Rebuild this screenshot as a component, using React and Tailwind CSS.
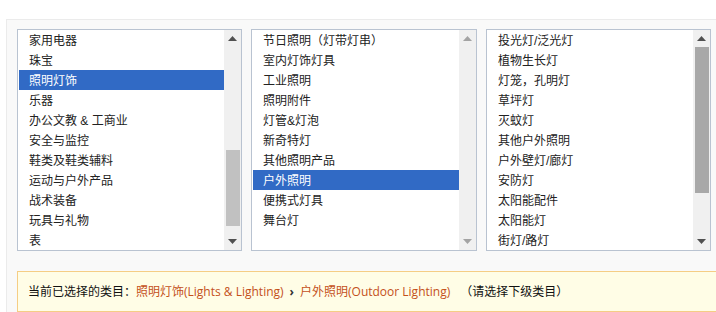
const col1 = ["家用电器","珠宝","照明灯饰","乐器","办公文教 & 工商业","安全与监控","鞋类及鞋类辅料","运动与户外产品","战术装备","玩具与礼物","表"];
const col2 = ["节日照明（灯带灯串）","室内灯饰灯具","工业照明","照明附件","灯管&灯泡","新奇特灯","其他照明产品","户外照明","便携式灯具","舞台灯"];
const col3 = ["投光灯/泛光灯","植物生长灯","灯笼，孔明灯","草坪灯","灭蚊灯","其他户外照明","户外壁灯/廊灯","安防灯","太阳能配件","太阳能灯","街灯/路灯"];

function Up({ c }) {
  return (
    <svg width="9" height="5" viewBox="0 0 9 5"><path d="M0 5 L4.5 0 L9 5 Z" fill={c} /></svg>
  );
}
function Down({ c }) {
  return (
    <svg width="9" height="5" viewBox="0 0 9 5"><path d="M0 0 L4.5 5 L9 0 Z" fill={c} /></svg>
  );
}

function ListBox({ items, selected, width, thumbTop, thumbH, thumbColor, arrowColor }) {
  return (
    <div className="flex h-[222px] border border-[#b9c3d1] bg-white" style={{ width }}>
      <div className="flex-1 pl-px overflow-hidden">
        {items.map((t, i) => (
          <div
            key={i}
            className={
              "h-5 pt-[2px] leading-[18px] pl-[10px] whitespace-nowrap " +
              (i === selected ? "bg-[#316ac5] text-white" : "text-[#222]")
            }
          >
            {t}
          </div>
        ))}
      </div>
      <div className="w-[17px] bg-[#f0f0f0] relative flex flex-col justify-between items-center">
        <div className="h-[17px] flex items-center justify-center"><Up c={arrowColor} /></div>
        <div className="h-[17px] flex items-center justify-center"><Down c={arrowColor} /></div>
        {thumbH ? (
          <div
            className="absolute left-[2px] right-px"
            style={{ top: thumbTop, height: thumbH, background: thumbColor }}
          />
        ) : null}
      </div>
    </div>
  );
}

export default function App() {
  return (
    <div
      className="w-[716px] h-[312px] bg-white overflow-hidden text-[12px]"
      style={{ fontFamily: '"Liberation Sans", "Noto Sans CJK SC", sans-serif' }}
    >
      <div className="ml-[6px] mt-[19px] w-[720px] h-[300px] bg-[#f9f9f9] border-t border-l border-[#ebebeb] pl-[10px] pt-[9px]">
        <div className="flex gap-[9px]">
          <ListBox items={col1} selected={2} width={225} thumbTop={120} thumbH={76} thumbColor="#c1c1c1" arrowColor="#505050" />
          <ListBox items={col2} selected={7} width={226} thumbH={0} arrowColor="#a3a3a3" />
          <ListBox items={col3} selected={-1} width={225} thumbTop={17} thumbH={146} thumbColor="#a8a8a8" arrowColor="#505050" />
        </div>
        <div
          className="mt-[20px] h-[41px] border border-[#f5cd85] bg-[#fffde6] flex items-center pl-[10px] whitespace-nowrap"
          style={{ fontFamily: '"Open Sans", "Noto Sans CJK SC", sans-serif' }}
        >
          <span className="text-[#111]">当前已选择的类目：</span>
          <span className="text-[#c4501a]">照明灯饰(Lights &amp; Lighting)</span>
          <span className="text-[#333] mx-[6px] font-bold">›</span>
          <span className="text-[#c4501a]">户外照明(Outdoor Lighting)</span>
          <span className="text-[#111] ml-[10px]">（请选择下级类目）</span>
        </div>
      </div>
    </div>
  );
}
